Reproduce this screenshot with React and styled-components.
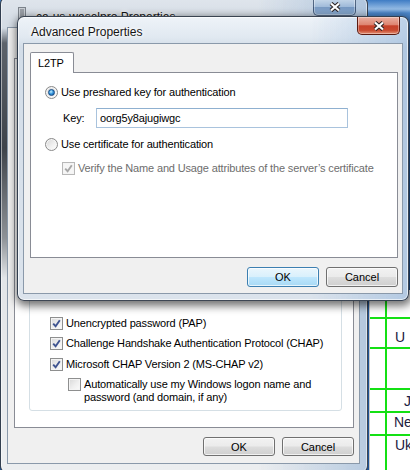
import React from 'react'
import styled, { createGlobalStyle } from 'styled-components'

const GlobalStyle = createGlobalStyle`
  html, body { margin: 0; padding: 0; }
  body {
    width: 410px;
    height: 470px;
    overflow: hidden;
    font-family: "Liberation Sans", Arial, sans-serif;
    font-size: 11px;
    letter-spacing: -0.15px;
    color: #000;
  }
`

const XIcon = () => (
  <svg width="12" height="10" viewBox="0 0 12 10">
    <path d="M2 1.5 L10 8.5 M10 1.5 L2 8.5" stroke="#2d2424" strokeWidth="4.2" />
    <path d="M2 1.5 L10 8.5 M10 1.5 L2 8.5" stroke="#fff" strokeWidth="2.2" />
  </svg>
)

const Check = ({ disabled }) => (
  <svg width="9" height="9" viewBox="0 0 9 9">
    <path d="M1.2 4.6 L3.6 7.2 L7.8 1.3" fill="none" stroke={disabled ? '#a7a7a7' : '#3f5490'} strokeWidth="1.9" />
  </svg>
)

const ConnIcon = () => (
  <svg width="16" height="16" viewBox="0 0 16 16">
    <rect x="0.5" y="0.5" width="7" height="15" fill="#c9ced4" stroke="#7c838b" />
    <path d="M2 3h4M2 5h4M2 7h4M2 9h4" stroke="#6b7178" />
  </svg>
)

const Field = ({ checked, disabled, children }) => (
  <CheckRow>
    <Box $disabled={disabled}>{checked && <Check disabled={disabled} />}</Box>
    <Label $disabled={disabled}>{children}</Label>
  </CheckRow>
)

const App = () => {
  const sheetRows = [
    { h: 29, text: '' },
    { h: 30, text: 'U', pt: 10, pl: 8 },
    { h: 41, text: '' },
    { h: 23, text: 'J', pt: 3, pl: 17 },
    { h: 23, text: 'Ne', pt: 1, pl: 7 },
    { h: 40, text: 'Uk', pt: 1, pl: 8, last: true },
  ]

  return (
    <Desktop>
      <GlobalStyle />

      <Sheet>
        {sheetRows.map((r, i) => (
          <SheetRow key={i} $h={r.h} $last={r.last}>
            <SheetCell $first />
            <SheetCell style={{ paddingTop: r.pt, paddingLeft: r.pl }}>{r.text}</SheetCell>
          </SheetRow>
        ))}
      </Sheet>

      <BackWindow>
        <TitleBar $h={29} $pl={11}>
          <ConnIcon />
          <Title $pt={11}>ca-us-waselpro Properties</Title>
          <CloseButton>
            <XIcon />
          </CloseButton>
        </TitleBar>
        <Client $pad="30px 5px 7px 6px">
          <Panel $pad="40px 11px 16px 14px">
            <GroupBox>
              <CheckList>
                <Field checked>Unencrypted password (PAP)</Field>
                <Field checked>Challenge Handshake Authentication Protocol (CHAP)</Field>
                <Field checked>Microsoft CHAP Version 2 (MS-CHAP v2)</Field>
                <SubRow>
                  <Box />
                  <Label>
                    Automatically use my Windows logon name and
                    <br />
                    password (and domain, if any)
                  </Label>
                </SubRow>
              </CheckList>
            </GroupBox>
          </Panel>
          <ButtonRow>
            <Button $h={19}>OK</Button>
            <Button $h={19}>Cancel</Button>
          </ButtonRow>
        </Client>
      </BackWindow>

      <FrontWindow>
        <TitleBar $h={26} $pl={6}>
          <Title $pt={7} $active>Advanced Properties</Title>
          <CloseButton $active>
            <XIcon />
          </CloseButton>
        </TitleBar>
        <Client $pad="8px 4px 6px 6px">
          <TabStrip>
            <Tab>L2TP</Tab>
          </TabStrip>
          <Panel $pad="13px 10px 10px 14px">
            <RadioRow>
              <Radio $checked />
              <Label>Use preshared key for authentication</Label>
            </RadioRow>
            <KeyRow>
              <KeyLabel>Key:</KeyLabel>
              <KeyInput readOnly value="oorg5y8ajugiwgc" />
            </KeyRow>
            <RadioRow $mt={10}>
              <Radio />
              <Label>Use certificate for authentication</Label>
            </RadioRow>
            <Indented>
              <Field checked disabled>
                Verify the Name and Usage attributes of the server’s certificate
              </Field>
            </Indented>
          </Panel>
          <ButtonRow $mt={9}>
            <Button $h={20} $default>OK</Button>
            <Button $h={20}>Cancel</Button>
          </ButtonRow>
        </Client>
      </FrontWindow>
    </Desktop>
  )
}

export default App

const Desktop = styled.div`
  position: relative;
  width: 410px;
  height: 470px;
  overflow: hidden;
  background: linear-gradient(180deg, #3f7cc4 0px, #94bbe4 9px, #4d88cc 13px, #2a62a8 60px, #1f5599 300px);
`

const Sheet = styled.div`
  position: absolute;
  left: 369px;
  top: 290px;
  width: 41px;
  height: 190px;
  display: flex;
  flex-direction: column;
  overflow: hidden;
  background: #fff;
  border-left: 1px solid #c9c9c9;
  font-size: 14px;
  letter-spacing: 0;
  color: #1c2040;
`

const SheetRow = styled.div`
  display: grid;
  grid-template-columns: 17px 1fr;
  height: ${p => p.$h}px;
  box-sizing: border-box;
  border-bottom: ${p => (p.$last ? 'none' : '2px solid #14e014')};
`

const SheetCell = styled.div`
  box-sizing: border-box;
  line-height: 16px;
  white-space: nowrap;
  overflow: hidden;
  border-right: ${p => (p.$first ? '2px solid #14e014' : 'none')};
`

const WindowBase = styled.div`
  position: absolute;
  box-sizing: border-box;
  display: flex;
  flex-direction: column;
  border: 1px solid rgba(18, 28, 42, 0.8);
  border-radius: 7px;
`

const BackWindow = styled(WindowBase)`
  left: 0;
  top: -3px;
  width: 368px;
  height: 476px;
  padding: 0 7px 8px 6px;
  background:
    linear-gradient(90deg, rgba(255,255,255,0) 70%, rgba(120,160,205,0.45) 100%),
    linear-gradient(180deg, #dfe5ec 0px, #d3dbe4 30px, #5d636b 45px, #3e434a 150px, #8e9297 240px, #e2e5e8 280px, #eceef0 100%);
  box-shadow: inset 0 0 0 1px rgba(255,255,255,0.5);
`

const FrontWindow = styled(WindowBase)`
  left: 17px;
  top: 16px;
  width: 392px;
  height: 285px;
  padding: 0 5px 6px 5px;
  background:
    linear-gradient(90deg, rgba(255,255,255,0) 75%, rgba(130,170,215,0.45) 100%),
    linear-gradient(180deg, #eef3f8 0px, #e1e9f1 20px, #d3dde8 30px, #dbe3ec 100%);
  box-shadow: inset 0 0 0 1px rgba(255,255,255,0.65), 1px 3px 9px 2px rgba(0,0,0,0.55);
`

const TitleBar = styled.div`
  display: flex;
  align-items: flex-start;
  height: ${p => p.$h}px;
  flex-shrink: 0;
  padding-left: ${p => p.$pl}px;
  svg { flex-shrink: 0; }
  > svg:first-child { margin-top: 9px; }
`

const Title = styled.div`
  padding-top: ${p => p.$pt}px;
  margin-left: 2px;
  font-size: 12px;
  line-height: 16px;
  letter-spacing: 0;
  color: #141414;
  white-space: nowrap;
  text-shadow: 0 0 6px #fff, 0 0 4px #fff, 0 0 2px #fff;
`

const CloseButton = styled.div`
  margin-left: auto;
  margin-right: ${p => (p.$active ? 3 : 4)}px;
  width: 43px;
  height: 18px;
  box-sizing: border-box;
  display: flex;
  align-items: center;
  justify-content: center;
  border: 1px solid ${p => (p.$active ? '#5b1a10' : 'rgba(40,60,90,0.7)')};
  border-top: none;
  border-radius: 0 0 5px 5px;
  background: ${p =>
    p.$active
      ? 'linear-gradient(180deg, #eab0a2 0%, #de8571 45%, #c6412a 52%, #c8492f 78%, #e39276 100%)'
      : 'linear-gradient(180deg, rgba(210,225,240,0.7) 0%, rgba(150,180,215,0.7) 50%, rgba(90,130,180,0.7) 52%, rgba(120,160,205,0.7) 100%)'};
  box-shadow: inset 0 0 0 1px rgba(255, 255, 255, 0.35);
`

const Client = styled.div`
  flex: 1;
  display: flex;
  flex-direction: column;
  box-sizing: border-box;
  padding: ${p => p.$pad};
  background: #f0f0f0;
  border: 1px solid #8a99aa;
`

const TabStrip = styled.div`
  display: flex;
  height: 20px;
  flex-shrink: 0;
`

const Tab = styled.div`
  position: relative;
  z-index: 1;
  width: 44px;
  height: 21px;
  box-sizing: border-box;
  padding: 3px 0 0 7px;
  margin-bottom: -1px;
  background: #fff;
  border: 1px solid #898c95;
  border-bottom: none;
  border-radius: 2px 2px 0 0;
  line-height: 14px;
`

const Panel = styled.div`
  flex: 1;
  display: flex;
  flex-direction: column;
  box-sizing: border-box;
  padding: ${p => p.$pad};
  background: #fff;
  border: 1px solid #898c95;
`

const RadioRow = styled.div`
  display: flex;
  align-items: center;
  gap: 3px;
  height: 13px;
  margin-top: ${p => p.$mt || 0}px;
`

const Radio = styled.span`
  width: 13px;
  height: 13px;
  box-sizing: border-box;
  flex-shrink: 0;
  display: flex;
  align-items: center;
  justify-content: center;
  border-radius: 50%;
  border: 1px solid #8a8a8a;
  background: linear-gradient(135deg, #d6d6d6 0%, #f2f2f2 60%, #ffffff 100%);
  box-shadow: inset 0 0 0 1px #f6f6f6;
  &::after {
    content: '';
    display: ${p => (p.$checked ? 'block' : 'none')};
    width: 7px;
    height: 7px;
    box-sizing: border-box;
    border-radius: 50%;
    border: 1px solid #134a85;
    background: radial-gradient(circle at 40% 35%, #c6f0ff 0%, #3b9ae0 45%, #0d4f94 100%);
  }
`

const Label = styled.span`
  line-height: 13px;
  white-space: nowrap;
  color: ${p => (p.$disabled ? '#6d6d6d' : '#000')};
`

const KeyRow = styled.div`
  display: flex;
  align-items: center;
  margin: 9px 0 0 18px;
  height: 20px;
`

const KeyLabel = styled.span`
  width: 33px;
  flex-shrink: 0;
`

const KeyInput = styled.input`
  width: 252px;
  height: 20px;
  box-sizing: border-box;
  margin: 0;
  padding: 0 0 0 3px;
  border: 1px solid #a9c3dd;
  border-top-color: #8fb0d0;
  background: #fff;
  font-family: "Liberation Sans", Arial, sans-serif;
  font-size: 11px;
  letter-spacing: -0.15px;
  color: #000;
  outline: none;
`

const Indented = styled.div`
  margin: 11px 0 0 17px;
`

const CheckRow = styled.div`
  display: flex;
  align-items: center;
  gap: 3px;
  height: 13px;
`

const Box = styled.span`
  width: 13px;
  height: 13px;
  box-sizing: border-box;
  flex-shrink: 0;
  display: flex;
  align-items: center;
  justify-content: center;
  border: 1px solid ${p => (p.$disabled ? '#b8b8b8' : '#8e8f8f')};
  background: ${p =>
    p.$disabled ? '#f6f6f6' : 'linear-gradient(135deg, #d8d8d8 0%, #efefef 55%, #fbfbfb 100%)'};
  box-shadow: inset 0 0 0 1px #f4f4f4;
`

const GroupBox = styled.div`
  flex: 1;
  display: flex;
  flex-direction: column;
  justify-content: flex-end;
  padding: 0 0 6px 20px;
  border: 1px solid #d5dfe5;
  border-radius: 3px;
`

const CheckList = styled.div`
  display: flex;
  flex-direction: column;
  gap: 7.5px;
`

const SubRow = styled.div`
  display: flex;
  align-items: flex-start;
  gap: 3px;
  margin-left: 18px;
`

const ButtonRow = styled.div`
  display: flex;
  justify-content: flex-end;
  gap: 7px;
  margin-top: ${p => p.$mt || 9}px;
  flex-shrink: 0;
`

const Button = styled.button`
  width: 72px;
  height: ${p => p.$h}px;
  box-sizing: border-box;
  margin: 0;
  padding: 0;
  border: 1px solid ${p => (p.$default ? '#3c7fb1' : '#707070')};
  border-radius: 3px;
  background: ${p =>
    p.$default
      ? 'linear-gradient(180deg, #eaf6fd 0%, #d9f0fc 48%, #bee6fd 52%, #a7d9f5 100%)'
      : 'linear-gradient(180deg, #f2f2f2 0%, #ebebeb 48%, #dddddd 52%, #cfcfcf 100%)'};
  box-shadow: inset 0 0 0 1px rgba(255, 255, 255, 0.7);
  font-family: "Liberation Sans", Arial, sans-serif;
  font-size: 11px;
  color: #000;
`
